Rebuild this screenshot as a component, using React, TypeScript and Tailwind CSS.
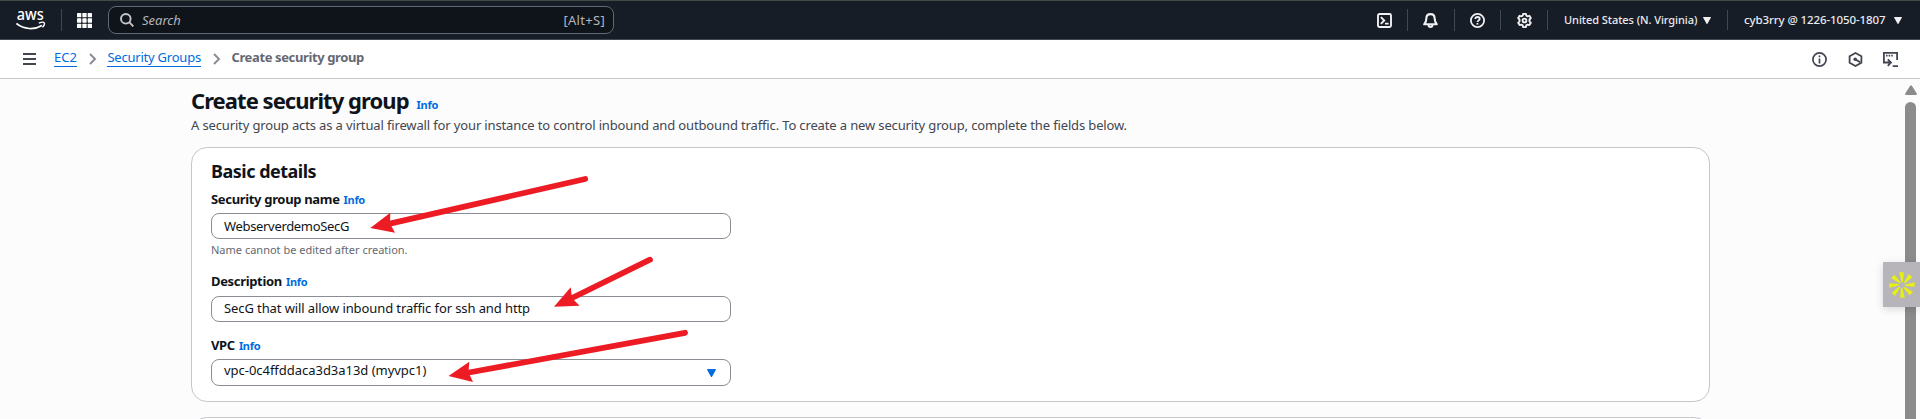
import React from 'react';

function Info({ className = '' }: { className?: string }) {
  return <a className={`text-[11px] leading-none font-bold tracking-[-0.3px] text-[#006ce0] ${className}`}>Info</a>;
}

function Caret({ className = '' }: { className?: string }) {
  return (
    <svg viewBox="0 0 9 8" preserveAspectRatio="none" className={className}>
      <path d="M.7 0h7.600a.6.6 0 0 1 .5.9L5 7.700a.6.6 0 0 1-1 0L.2.9A.6.6 0 0 1 .7 0z" fill="currentColor" />
    </svg>
  );
}

function Divider({ className = '' }: { className?: string }) {
  return <div className={`w-px shrink-0 bg-[#424650] ${className}`} />;
}

function Chevron({ className = '' }: { className?: string }) {
  return (
    <svg viewBox="0 0 8 12" className={`h-3 w-2 shrink-0 ${className}`} fill="none" stroke="#8c8c94" strokeWidth="2">
      <path d="M1 1l5 5-5 5" />
    </svg>
  );
}

function AwsLogo() {
  return (
    <svg viewBox="0 -7 30 38" className="ml-4 h-[38px] w-[30px] shrink-0">
      <text x="0.800" y="12" fontSize="15.500" fontFamily="Noto Sans, sans-serif" fontWeight="500" fill="#fff" textLength="27" lengthAdjust="spacingAndGlyphs">aws</text>
      <path d="M.4 15.500C8 21.800 18.500 21.900 26 17.400" stroke="#fff" strokeWidth="1.700" fill="none" />
      <path d="M22.800 15.200c2.200-.9 4.900-1.100 5.400-.4s-.2 2.900-1.700 4.600" stroke="#fff" strokeWidth="1.400" fill="none" />
    </svg>
  );
}

function TopBar() {
  return (
    <header className="flex h-10 items-center border-t border-b border-t-[#424a44] border-b-[#424650] bg-[#161d26] text-white">
      <AwsLogo />
      <Divider className="ml-[15px] h-[22px]" />
      <svg viewBox="0 0 15 15" className="ml-[15px] size-[15px] shrink-0" fill="#fff">
        {[0, 5.35, 10.7].map((y) => [0, 5.35, 10.7].map((x) => <rect key={`${x}-${y}`} x={x} y={y} width="4.300" height="4.300" rx=".6" />))}
      </svg>
      <div className="ml-4 flex h-7 w-[506px] items-center rounded-lg border border-[#656871] bg-[#0f141a] pr-2 pl-[11px] text-[13px] text-[#b4b4bb]">
        <svg viewBox="0 0 14 14" className="size-[14px]" fill="none" stroke="#c6c6cd" strokeWidth="1.900">
          <circle cx="5.800" cy="5.800" r="4.800" />
          <path d="M9.200 9.200l4.200 4.200" />
        </svg>
        <span className="ml-2 leading-5 italic">Search</span>
        <span className="ml-auto leading-5 tracking-[0.3px]">[Alt+S]</span>
      </div>
      <div className="ml-auto flex items-center pr-[18px]">
        <svg viewBox="0 0 15 15" className="size-[15px]" fill="none" stroke="#f0f0f3" strokeWidth="1.900">
          <rect x="1" y="1" width="13" height="13" rx="1.500" />
          <path d="M3.900 4.200l3.300 3.300-3.300 3.300M8 10.600h3.600" />
        </svg>
        <Divider className="ml-[15px] h-[22px]" />
        <svg viewBox="0 0 15 15" className="ml-[15px] size-[15px]" fill="none" stroke="#f0f0f3" strokeWidth="2.100" strokeLinejoin="round">
          <path d="M7.500 1.100c-2.600 0-4.100 1.800-4.100 4.100 0 3-.8 4.200-2.200 6.100h12.600c-1.400-1.900-2.200-3.100-2.200-6.100 0-2.300-1.500-4.100-4.100-4.100z" />
          <path d="M5.600 12a1.900 1.900 0 0 0 3.800 0" />
        </svg>
        <Divider className="ml-4 h-[22px]" />
        <svg viewBox="0 0 15 15" className="ml-[15px] size-[15px]" fill="none" stroke="#f0f0f3" strokeWidth="1.800">
          <circle cx="7.500" cy="7.500" r="6.600" />
          <path d="M5.300 6c0-1.300 1-2 2.200-2s2.200.8 2.200 1.900c0 1.500-2.200 1.500-2.200 3.200" />
          <path d="M7.500 10v1.600" />
        </svg>
        <Divider className="ml-[15px] h-5" />
        <svg viewBox="0 0 15 15" className="ml-4 size-[15px]" fill="none" stroke="#f0f0f3" strokeWidth="1.900" strokeLinejoin="round">
          <path d="M6.100.9h2.800l.4 1.700 1.300.7 1.800-.5 1.400 2.300-1.300 1.400v1.900l1.300 1.400-1.400 2.300-1.800-.5-1.300.7-.4 1.800H6.100l-.4-1.800-1.300-.7-1.800.5L1.200 9.800l1.300-1.400V6.500L1.200 5.100l1.400-2.300 1.800.5 1.300-.7z" />
          <circle cx="7.500" cy="7.500" r="1.900" />
        </svg>
        <Divider className="ml-[15px] h-5" />
        <span className="ml-4 w-[134px] pb-px text-[11px] leading-4 font-medium tracking-[-0.06px] whitespace-nowrap text-[#ebebf0]">United States (N. Virginia)</span>
        <Caret className="ml-[5px] h-[7px] w-2 text-[#f0f0f3]" />
        <Divider className="ml-4 h-5" />
        <span className="ml-4 w-[144px] pb-px text-[11.5px] leading-4 font-medium tracking-[-0.1px] whitespace-nowrap text-[#ebebf0]">cyb3rry @ 1226-1050-1807</span>
        <Caret className="ml-[6px] h-[7px] w-2 text-[#f0f0f3]" />
      </div>
    </header>
  );
}

function Breadcrumbs() {
  return (
    <nav className="flex h-[39px] items-center border-b border-[#c6c6cd] bg-white text-[13px]">
      <svg viewBox="0 0 13 12" className="ml-[23px] h-3 w-[13px]" fill="none" stroke="#424650" strokeWidth="2">
        <path d="M0 1h13M0 6h13M0 11h13" />
      </svg>
      <a className="mb-[2px] ml-[18px] border-b border-[#006ce0] leading-[17px] text-[#006ce0]">EC2</a>
      <Chevron className="ml-[12px]" />
      <a className="mb-[2px] ml-[10.5px] border-b border-[#006ce0] leading-[17px] tracking-[-0.22px] text-[#006ce0]">Security Groups</a>
      <Chevron className="ml-[12px]" />
      <span className="mb-[3px] ml-[10.5px] leading-[17px] font-bold tracking-[-0.38px] text-[#656871]">Create security group</span>
      <div className="ml-auto flex items-center gap-[21px] pr-[22px] text-[#424650]">
        <svg viewBox="0 0 15 15" className="size-[15px]" fill="none" stroke="currentColor" strokeWidth="1.700">
          <circle cx="7.500" cy="7.500" r="6.600" />
          <path d="M7.500 6.500v5M7.500 3.600v1.700" />
        </svg>
        <svg viewBox="0 0 15 15" className="size-[15px]" fill="none" stroke="currentColor" strokeWidth="1.800">
          <path d="M7.500 1l5.900 3.300v6.400L7.500 14l-5.900-3.300V4.300z" />
          <circle cx="7.200" cy="7.300" r="1.800" fill="currentColor" stroke="none" />
          <path d="M7.400 7.400l4.800 2.800" />
        </svg>
        <svg viewBox="0 0 15 15" className="-ml-px size-[15px]" fill="none" stroke="currentColor" strokeWidth="1.800">
          <path d="M14.100 8V.9H.9v9.600h6M4.800 7.300L8 10.500l-3.200 3.300" />
          <path d="M3 3.600h1.600M5.600 3.600h1.600M8.200 3.600h1.600M9.700 14.100H15" />
        </svg>
      </div>
    </nav>
  );
}

function Label({ text, className = '' }: { text: string; className?: string }) {
  return (
    <div className={`h-5 text-[13px] leading-5 whitespace-nowrap ${className}`}>
      <span className="font-bold tracking-[-0.33px]">{text}</span>
      <Info className="ml-1" />
    </div>
  );
}

function SecurityGroupForm() {
  return (
    <section className="mt-3 h-[255px] w-[1519px] rounded-2xl border border-[#c6c6cd] bg-white px-[19px] pt-3">
      <h2 className="text-[18px] leading-[22px] font-bold tracking-[-0.5px]">Basic details</h2>
      <Label text="Security group name" className="mt-[7px]" />
      <div className="mt-1 h-[26px] w-[520px] rounded-lg border border-[#8c8c94] pl-3 text-[13px] leading-6 tracking-[-0.33px]">WebserverdemoSecG</div>
      <p className="mt-[3px] text-[11px] leading-4 text-[#656871]">Name cannot be edited after creation.</p>
      <Label text="Description" className="mt-[13px]" />
      <div className="mt-[5px] h-[26px] w-[520px] rounded-lg border border-[#8c8c94] pl-3 text-[13px] leading-[22px] tracking-[-0.1px]">SecG that will allow inbound traffic for ssh and http</div>
      <Label text="VPC" className="mt-[13px]" />
      <div className="mt-1 flex h-[27px] w-[520px] items-center justify-between rounded-lg border border-[#8c8c94] pr-[14px] pl-3 text-[13px]">
        <span className="pb-[3px] tracking-[-0.03px]">vpc-0c4ffddaca3d3a13d (myvpc1)</span>
        <Caret className="h-2 w-[9px] text-[#006ce0]" />
      </div>
    </section>
  );
}

function Annotations() {
  return (
    <svg viewBox="0 0 1920 419" className="pointer-events-none absolute inset-0 h-[419px] w-[1920px]" fill="#ed1c24" stroke="#ed1c24">
      <g strokeWidth="5.800" strokeLinecap="round">
        <path d="M585.200 179L391 223.300" />
        <path d="M650 259.700L572 298" />
        <path d="M685 332.800L469 372.500" />
      </g>
      <g stroke="none">
        <path d="M370.300 228L390.300 212.700 390 223.500 395 232.700z" />
        <path d="M554 306.700L570.700 287.300 572 298 579.500 305.700z" />
        <path d="M448.500 376L469.300 361.700 468.500 372.500 473 382z" />
      </g>
    </svg>
  );
}

function Widget() {
  return (
    <div className="absolute top-[262px] right-0 flex h-[45px] w-[37px] items-center bg-[#b7b5b9] pl-[6px] shadow-[0_2px_8px_rgba(0,0,0,0.15)]">
      <svg viewBox="-13 -13 26 26" className="size-[26px]" fill="#e6f013">
        {[0, 45, 90, 135, 180, 225, 270, 315].map((a) => (
          <path key={a} d="M-2.800-12.700H1.800L1-2.600-.6-3.600z" transform={`rotate(${a})`} />
        ))}
      </svg>
    </div>
  );
}

export default function App() {
  return (
    <div className="relative h-[419px] overflow-hidden bg-[#fcfcfd] font-['Noto_Sans',sans-serif] text-[#0f141a]">
      <TopBar />
      <Breadcrumbs />
      <div className="flex h-[340px] overflow-hidden">
        <main className="flex-1 pt-1.5 pl-[191px]">
          <h1 className="flex h-[30px] items-baseline text-[22px] leading-[30px] font-bold tracking-[-0.95px]">
            Create security group
            <Info className="ml-2" />
          </h1>
          <p className="text-[13px] leading-5 tracking-[-0.14px] text-[#424650]">
            A security group acts as a virtual firewall for your instance to control inbound and outbound traffic. To create a new security group, complete the fields below.
          </p>
          <SecurityGroupForm />
          <section className="mt-[15px] h-10 w-[1519px] rounded-2xl border border-[#c6c6cd] bg-white" />
        </main>
        <aside className="flex w-[15px] flex-col pt-1.5">
          <svg viewBox="0 0 12 10" className="h-[10px] w-3 shrink-0" fill="#8b8b8b">
            <path d="M5 .9a1.200 1.200 0 0 1 2 0l4.600 7.300A1.100 1.100 0 0 1 10.700 10H1.300A1.100 1.100 0 0 1 .4 8.200z" />
          </svg>
          <div className="mt-[7px] w-[11px] flex-1 rounded-t-full bg-[#8b8b8b]" />
        </aside>
      </div>
      <Annotations />
      <Widget />
    </div>
  );
}
